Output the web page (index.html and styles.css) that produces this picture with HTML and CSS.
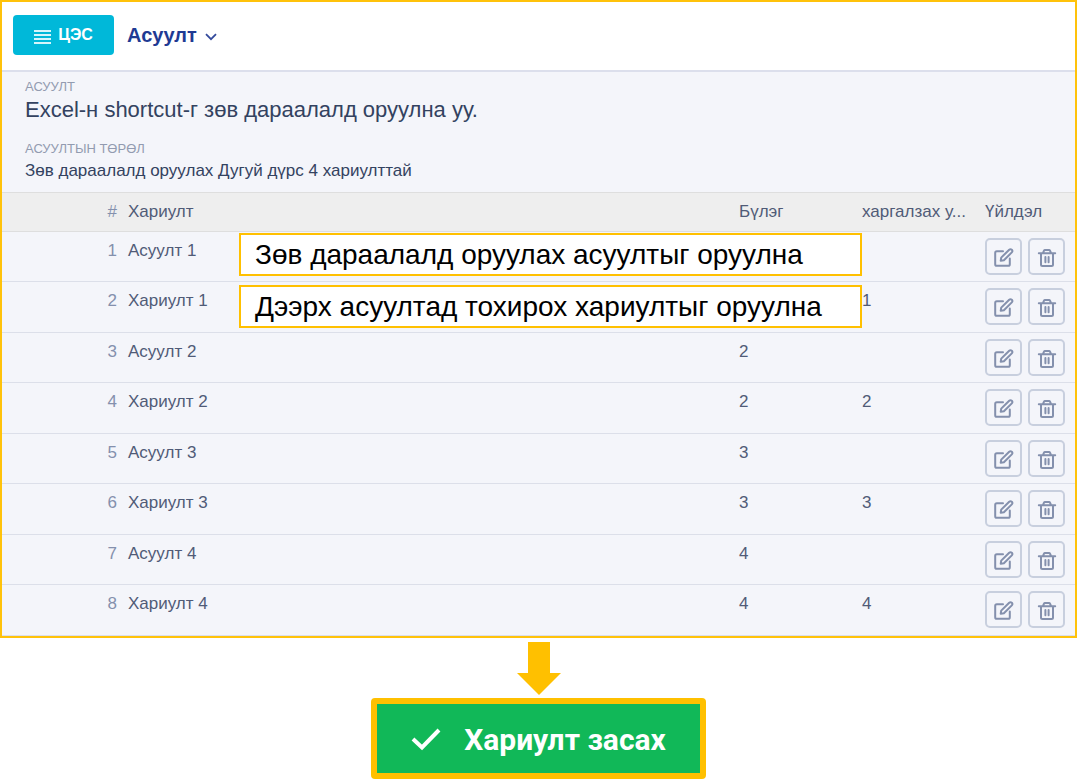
FILE: index.html
```html
<!DOCTYPE html>
<html lang="mn">
<head>
<meta charset="utf-8">
<meta name="viewport" content="width=device-width, initial-scale=1">
<title>Асуулт</title>
<link rel="stylesheet" href="styles.css">
</head>
<body>
<svg class="sprite" aria-hidden="true">
  <symbol id="edit" viewBox="0 0 20 20">
    <path d="M9 3.2H2.8Q1.2 3.2 1.2 4.8V16.2Q1.2 17.8 2.8 17.8H14.2Q15.8 17.8 15.8 16.2V10.5"/>
    <path d="M6.7 12.8L7.2 9.6L15.2 1.7Q16.5 .6 17.8 1.8Q19 3.1 17.8 4.4L9.9 12.2Z"/>
  </symbol>
  <symbol id="trash" viewBox="0 0 20 20">
    <path d="M1.800 5.300H18.200M6 5L7 2.700Q7.300 2 8 2H12Q12.700 2 13 2.700L14 5M4 5.500V16.500Q4 18 5.500 18H14.500Q16 18 16 16.500V5.500M8.400 9V14.200M11.600 9V14.200"/>
  </symbol>
</svg>
<main class="panel">
  <header class="topbar">
    <button class="menu" type="button">
      <svg class="menu-icon" viewBox="0 0 17 14" aria-hidden="true"><path d="M0 1H17M0 5H17M0 9H17M0 13H17"/></svg>
      <span>ЦЭС</span>
    </button>
    <button class="title" type="button">
      <span>Асуулт</span>
      <svg class="chevron" viewBox="0 0 12 8" aria-hidden="true"><path d="M1 1.2L6 6.2L11 1.2"/></svg>
    </button>
  </header>
  <dl class="details">
    <dt>АСУУЛТ</dt>
    <dd class="question">Excel-н shortcut-г зөв дараалалд оруулна уу.</dd>
    <dt>АСУУЛТЫН ТӨРӨЛ</dt>
    <dd class="kind">Зөв дараалалд оруулах Дугуй дүрс 4 хариулттай</dd>
  </dl>
  <table class="answers">
    <thead>
      <tr><th class="num">#</th><th>Хариулт</th><th class="group">Бүлэг</th><th class="match">харгалзах у...</th><th class="actions">Үйлдэл</th></tr>
    </thead>
    <tbody>
      <tr><td class="num">1</td><td class="name">Асуулт 1<div class="note">Зөв дараалалд оруулах асуултыг оруулна</div></td><td></td><td></td><td><div class="tools"><button type="button" aria-label="Засах"><svg><use href="#edit"/></svg></button><button type="button" aria-label="Устгах"><svg><use href="#trash"/></svg></button></div></td></tr>
      <tr><td class="num">2</td><td class="name">Хариулт 1<div class="note">Дээрх асуултад тохирох хариултыг оруулна</div></td><td></td><td>1</td><td><div class="tools"><button type="button" aria-label="Засах"><svg><use href="#edit"/></svg></button><button type="button" aria-label="Устгах"><svg><use href="#trash"/></svg></button></div></td></tr>
      <tr><td class="num">3</td><td>Асуулт 2</td><td>2</td><td></td><td><div class="tools"><button type="button" aria-label="Засах"><svg><use href="#edit"/></svg></button><button type="button" aria-label="Устгах"><svg><use href="#trash"/></svg></button></div></td></tr>
      <tr><td class="num">4</td><td>Хариулт 2</td><td>2</td><td>2</td><td><div class="tools"><button type="button" aria-label="Засах"><svg><use href="#edit"/></svg></button><button type="button" aria-label="Устгах"><svg><use href="#trash"/></svg></button></div></td></tr>
      <tr><td class="num">5</td><td>Асуулт 3</td><td>3</td><td></td><td><div class="tools"><button type="button" aria-label="Засах"><svg><use href="#edit"/></svg></button><button type="button" aria-label="Устгах"><svg><use href="#trash"/></svg></button></div></td></tr>
      <tr><td class="num">6</td><td>Хариулт 3</td><td>3</td><td>3</td><td><div class="tools"><button type="button" aria-label="Засах"><svg><use href="#edit"/></svg></button><button type="button" aria-label="Устгах"><svg><use href="#trash"/></svg></button></div></td></tr>
      <tr><td class="num">7</td><td>Асуулт 4</td><td>4</td><td></td><td><div class="tools"><button type="button" aria-label="Засах"><svg><use href="#edit"/></svg></button><button type="button" aria-label="Устгах"><svg><use href="#trash"/></svg></button></div></td></tr>
      <tr><td class="num">8</td><td>Хариулт 4</td><td>4</td><td>4</td><td><div class="tools"><button type="button" aria-label="Засах"><svg><use href="#edit"/></svg></button><button type="button" aria-label="Устгах"><svg><use href="#trash"/></svg></button></div></td></tr>
    </tbody>
  </table>
</main>
<footer class="next">
  <svg class="arrow" viewBox="0 0 46 54" aria-hidden="true"><path d="M12 0H34V31H45L23 53L1 31H12Z"/></svg>
  <button class="save" type="button">
    <svg class="check" viewBox="0 0 30 24" aria-hidden="true"><path d="M2 11L11 19.500L28 2"/></svg>
    <span>Хариулт засах</span>
  </button>
</footer>
</body>
</html>
```
FILE: styles.css
```css
* { box-sizing: border-box; }
body {
  margin: 0;
  background: #fff;
  color: #505b77;
  font: 17px/22px "Liberation Sans", Arial, sans-serif;
}
button { margin: 0; font: inherit; cursor: pointer; }
.sprite { display: none; }
.panel { border: 2px solid #ffc20a; background: #f4f5fa; }
.topbar {
  display: flex;
  align-items: center;
  gap: 13px;
  height: 70px;
  padding: 0 11px 2px;
  border-bottom: 2px solid #dcdfec;
  background: #fff;
}
.menu {
  display: flex;
  align-items: center;
  justify-content: center;
  gap: 7px;
  width: 101px;
  height: 40px;
  padding: 0;
  border: 0;
  border-radius: 4px;
  background: #00b8d9;
  color: #fff;
  font-size: 16px;
  font-weight: 700;
}
.menu-icon { width: 17px; height: 14px; margin-top: 4px; fill: none; stroke: #d5f5fb; stroke-width: 1.8; }
.title {
  display: flex;
  align-items: center;
  gap: 8px;
  padding: 0;
  border: 0;
  background: none;
  color: #1f3a93;
  font-size: 20px;
  font-weight: 700;
}
.chevron { width: 12px; height: 8px; margin-top: 4px; fill: none; stroke: #354b9c; stroke-width: 1.8; }
.details { margin: 0; padding: 8px 23px 6px; }
.details dt { color: #929bb0; font-size: 13px; line-height: 14px; }
.details dd { margin: 0; color: #334260; }
.details .question { margin-bottom: 16px; font-size: 22px; line-height: 32px; }
.details .kind { font-size: 17px; line-height: 30px; }
.answers { width: 100%; border-collapse: separate; border-spacing: 0; table-layout: fixed; }
.answers th, .answers td {
  padding: 8px 0 0 6px;
  border-bottom: 1px solid #dcdfe9;
  text-align: left;
  vertical-align: top;
  font-weight: 400;
}
.answers th {
  height: 40px;
  border-top: 1px solid #dedede;
  border-bottom-color: #dedede;
  background: #eee;
  white-space: nowrap;
}
.answers td { height: 50px; }
.answers tr:nth-child(even) td { height: 51px; }
.answers td:last-child { padding-top: 6px; }
.answers .num { width: 120px; padding-right: 5px; text-align: right; color: #8490ad; }
.group, .match { width: 123px; }
.actions { width: 96px; }
.name { position: relative; }
.note {
  position: absolute;
  top: 1px;
  left: 117px;
  z-index: 1;
  width: 623px;
  height: 43px;
  padding-left: 14px;
  border: 2px solid #ffc000;
  background: #fff;
  color: #000;
  font-size: 28px;
  line-height: 40px;
  white-space: nowrap;
}
tr:nth-child(even) .note { top: 3px; }
.tools { display: flex; gap: 6px; }
.tools button {
  display: grid;
  place-items: center;
  width: 37px;
  height: 37px;
  padding: 2px 0 0;
  border: 2px solid #c8cfde;
  border-radius: 5px;
  background: none;
}
.tools svg { width: 20px; height: 20px; fill: none; stroke: #8490ad; stroke-width: 2; stroke-linejoin: round; stroke-linecap: round; }
.next { display: flex; flex-direction: column; align-items: center; padding-top: 4px; }
.arrow { width: 46px; height: 54px; fill: #ffc000; }
.save {
  display: flex;
  align-items: center;
  justify-content: center;
  gap: 23px;
  width: 335px;
  height: 81px;
  margin-top: 2px;
  padding: 2px 0 0;
  border: 6px solid #ffc000;
  border-radius: 4px;
  background: #11b858;
  color: #fff;
  font: 700 30px/36px Roboto, sans-serif;
}
.check { width: 30px; height: 24px; fill: none; stroke: #fff; stroke-width: 4; }
```
